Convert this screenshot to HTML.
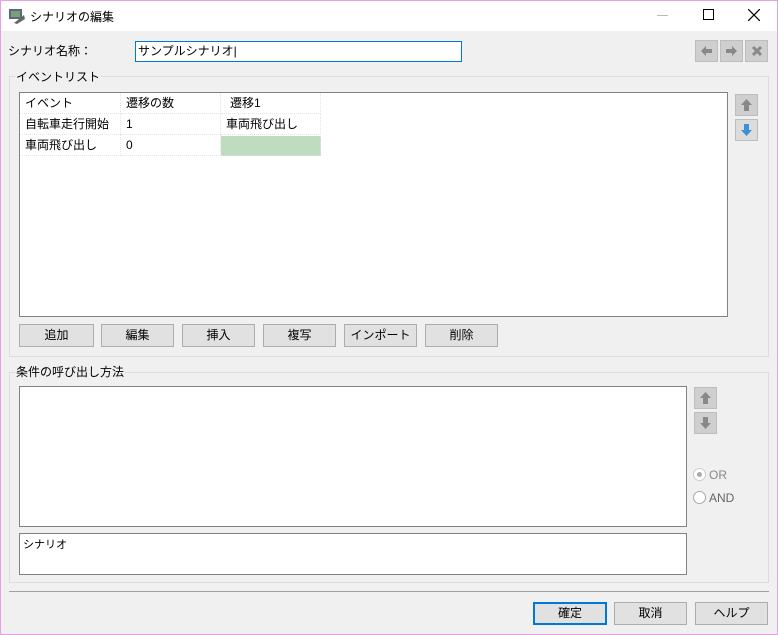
<!DOCTYPE html>
<html><head><meta charset="utf-8"><style>
*{box-sizing:border-box;margin:0;padding:0}
body{width:778px;height:635px;background:#f0f0f0;font-family:"Liberation Sans","Noto Sans CJK JP",sans-serif;font-size:12px;color:#000;position:relative;overflow:hidden}
.a{position:absolute}
.win{left:0;top:0;width:778px;height:635px;border:1px solid #e4a2e4}
.btn{position:absolute;background:#e1e1e1;border:1px solid #adadad;text-align:center;line-height:21px;font-size:12px}
.nb{position:absolute;background:#cfcfcf;border:1px solid #bdbdbd;width:23px;height:22px}
.grp{position:absolute;border:1px solid #dcdcdc}
.lbl{position:absolute;background:#f0f0f0;padding:0 1px;font-size:12px}
.box{position:absolute;background:#fff;border:1px solid #828282}
.cell{position:absolute;height:21px;line-height:21px;padding-left:5px;border-right:1px dotted #e4e4e4;border-bottom:1px dotted #e4e4e4}
</style></head><body>
<div class="a" style="left:0;top:0;width:778px;height:31px;background:#fff"></div>
<svg class="a" style="left:8px;top:7px" width="18" height="18" viewBox="0 0 18 18"><rect x="1" y="2" width="13" height="10" fill="#5a6a7a"/><rect x="3" y="4" width="9" height="6" fill="#7aa07a"/><path d="M6 16 L16 8 L17 12 L9 17Z" fill="#666"/></svg>
<div class="a" style="left:30px;top:8px;font-size:12px">シナリオの編集</div>
<div class="a" style="left:657px;top:15px;width:11px;height:1px;background:#bbb"></div>
<div class="a" style="left:703px;top:9px;width:11px;height:11px;border:1px solid #000"></div>
<svg class="a" style="left:748px;top:9px" width="12" height="12"><path d="M0 0L12 12M12 0L0 12" stroke="#000" stroke-width="1.2"/></svg>

<div class="a" style="left:8px;top:42px">シナリオ名称：</div>
<div class="a" style="left:135px;top:41px;width:327px;height:21px;background:#fff;border:1px solid #0078d7;padding-left:2px;line-height:19px;font-size:12px">サンプルシナリオ|</div>
<div class="nb" style="left:695px;top:40px"><svg width="21" height="20"><path d="M5 10L10 5V8H16V12H10V15Z" fill="#888"/></svg></div>
<div class="nb" style="left:720px;top:40px"><svg width="21" height="20"><path d="M16 10L11 5V8H5V12H11V15Z" fill="#888"/></svg></div>
<div class="nb" style="left:745px;top:40px"><svg width="21" height="20"><path d="M7 6L15 14M15 6L7 14" stroke="#888" stroke-width="3"/></svg></div>

<div class="grp" style="left:9px;top:76px;width:760px;height:281px"></div>
<div class="lbl" style="left:15px;top:68px">イベントリスト</div>
<div class="box" style="left:19px;top:92px;width:709px;height:225px">
<div class="cell" style="left:0;top:0;width:101px">イベント</div>
<div class="cell" style="left:101px;top:0;width:100px">遷移の数</div>
<div class="cell" style="left:201px;top:0;width:100px;padding-left:9px">遷移1</div>
<div class="cell" style="left:0;top:21px;width:101px">自転車走行開始</div>
<div class="cell" style="left:101px;top:21px;width:100px">1</div>
<div class="cell" style="left:201px;top:21px;width:100px">車両飛び出し</div>
<div class="cell" style="left:0;top:42px;width:101px">車両飛び出し</div>
<div class="cell" style="left:101px;top:42px;width:100px">0</div>
<div class="cell" style="left:201px;top:43px;width:100px;height:20px;background:#c0dcc0"></div>
</div>
<div class="nb" style="left:735px;top:94px"><svg width="21" height="20"><path d="M10.5 4L16 10H13V16H8V10H5Z" fill="#888"/></svg></div>
<div class="nb" style="left:735px;top:119px;background:#dcdcdc"><svg width="21" height="20"><path d="M10.5 16L16 10H13V4H8V10H5Z" fill="#3d8fd8"/></svg></div>
<div class="btn" style="left:19px;top:324px;width:75px;height:23px">追加</div>
<div class="btn" style="left:101px;top:324px;width:73px;height:23px">編集</div>
<div class="btn" style="left:182px;top:324px;width:73px;height:23px">挿入</div>
<div class="btn" style="left:263px;top:324px;width:73px;height:23px">複写</div>
<div class="btn" style="left:344px;top:324px;width:73px;height:23px">インポート</div>
<div class="btn" style="left:425px;top:324px;width:73px;height:23px">削除</div>

<div class="grp" style="left:9px;top:372px;width:760px;height:211px"></div>
<div class="lbl" style="left:15px;top:363px">条件の呼び出し方法</div>
<div class="box" style="left:19px;top:386px;width:668px;height:141px"></div>
<div class="box" style="left:19px;top:533px;width:668px;height:42px;padding:2px 0 0 3px;font-size:11px">シナリオ</div>
<div class="nb" style="left:694px;top:387px"><svg width="21" height="20"><path d="M10.5 4L16 10H13V16H8V10H5Z" fill="#888"/></svg></div>
<div class="nb" style="left:694px;top:412px"><svg width="21" height="20"><path d="M10.5 16L16 10H13V4H8V10H5Z" fill="#888"/></svg></div>
<div class="a" style="left:693px;top:468px;width:13px;height:13px;border-radius:50%;border:1px solid #ccc;background:#fff"><div class="a" style="left:3px;top:3px;width:5px;height:5px;border-radius:50%;background:#aaa"></div></div>
<div class="a" style="left:709px;top:468px;color:#888">OR</div>
<div class="a" style="left:693px;top:491px;width:13px;height:13px;border-radius:50%;border:1px solid #aaa;background:#fff"></div>
<div class="a" style="left:709px;top:491px;color:#666">AND</div>

<div class="a" style="left:9px;top:591px;width:760px;height:1px;background:#a0a0a0"></div>
<div class="btn" style="left:533px;top:602px;width:74px;height:23px;border:2px solid #0078d7;line-height:19px">確定</div>
<div class="btn" style="left:614px;top:602px;width:73px;height:23px">取消</div>
<div class="btn" style="left:695px;top:602px;width:73px;height:23px">ヘルプ</div>
<div class="a win"></div>
</body></html>
